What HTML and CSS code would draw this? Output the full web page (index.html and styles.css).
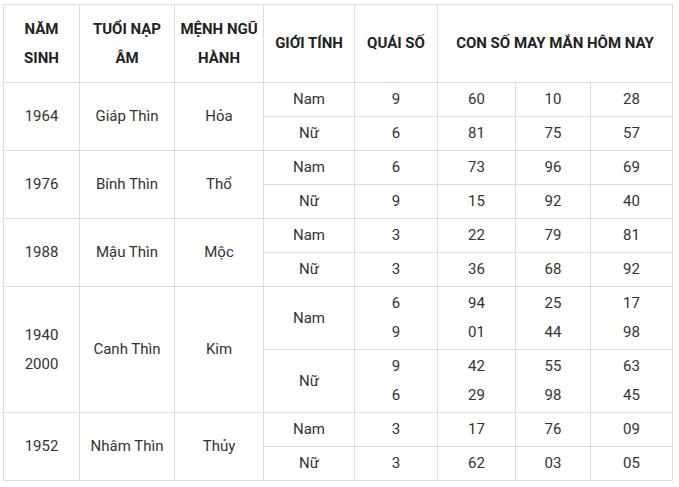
FILE: index.html
```html
<!DOCTYPE html>
<html lang="vi">
<head>
<meta charset="utf-8">
<link rel="stylesheet" href="styles.css">
</head>
<body>
<table class="lucky">
<colgroup>
<col class="c1"><col class="c2"><col class="c3"><col class="c4"><col class="c5"><col class="c6"><col class="c7"><col class="c8">
</colgroup>
<thead>
<tr class="head">
<th>NĂM<br>SINH</th><th>TUỔI NẠP<br>ÂM</th><th>MỆNH NGŨ<br>HÀNH</th><th>GIỚI TÍNH</th><th>QUÁI SỐ</th><th colspan="3">CON SỐ MAY MẮN HÔM NAY</th>
</tr>
</thead>
<tbody>
<tr class="r1"><td rowspan="2">1964</td><td rowspan="2">Giáp Thìn</td><td rowspan="2">Hỏa</td><td>Nam</td><td>9</td><td>60</td><td>10</td><td>28</td></tr>
<tr class="r1"><td>Nữ</td><td>6</td><td>81</td><td>75</td><td>57</td></tr>
<tr class="r1"><td rowspan="2">1976</td><td rowspan="2">Bính Thìn</td><td rowspan="2">Thổ</td><td>Nam</td><td>6</td><td>73</td><td>96</td><td>69</td></tr>
<tr class="r1"><td>Nữ</td><td>9</td><td>15</td><td>92</td><td>40</td></tr>
<tr class="r1"><td rowspan="2">1988</td><td rowspan="2">Mậu Thìn</td><td rowspan="2">Mộc</td><td>Nam</td><td>3</td><td>22</td><td>79</td><td>81</td></tr>
<tr class="r1"><td>Nữ</td><td>3</td><td>36</td><td>68</td><td>92</td></tr>
<tr class="r2"><td rowspan="2">1940<br>2000</td><td rowspan="2">Canh Thìn</td><td rowspan="2">Kim</td><td>Nam</td><td>6<br>9</td><td>94<br>01</td><td>25<br>44</td><td>17<br>98</td></tr>
<tr class="r2"><td>Nữ</td><td>9<br>6</td><td>42<br>29</td><td>55<br>98</td><td>63<br>45</td></tr>
<tr class="r1"><td rowspan="2">1952</td><td rowspan="2">Nhâm Thìn</td><td rowspan="2">Thủy</td><td>Nam</td><td>3</td><td>17</td><td>76</td><td>09</td></tr>
<tr class="r1"><td>Nữ</td><td>3</td><td>62</td><td>03</td><td>05</td></tr>
</tbody>
</table>
</body>
</html>
```
FILE: styles.css
```css
html, body {
  margin: 0;
  padding: 0;
  background: #fff;
}
body {
  padding: 4px 0 0 3px;
  font-family: Roboto, "Liberation Sans", sans-serif;
  font-size: 15px;
  color: #333;
}
.lucky {
  border-collapse: collapse;
  table-layout: fixed;
  width: 669px;
}
.lucky th, .lucky td {
  border: 1px solid #dcdcdc;
  text-align: center;
  vertical-align: middle;
  padding: 0 2px;
  line-height: 29px;
}
.lucky th {
  font-weight: 700;
  color: #222;
  font-size: 15px;
}
.c1 { width: 76px; }
.c2 { width: 95px; }
.c3 { width: 89px; }
.c4 { width: 91px; }
.c5 { width: 83px; }
.c6 { width: 78px; }
.c7 { width: 75px; }
.c8 { width: 82px; }
.head { height: 78px; }
.r1 { height: 34px; }
.r2 { height: 63px; }
```
